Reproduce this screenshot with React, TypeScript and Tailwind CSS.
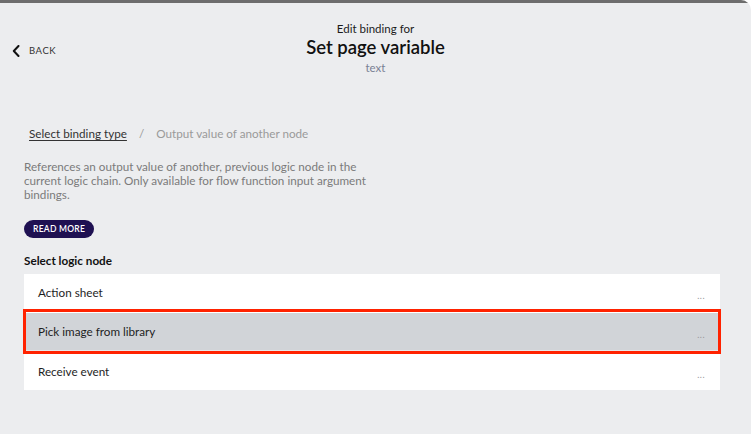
import React from 'react';

const nodes = ['Action sheet', 'Pick image from library', 'Receive event'];

function Chevron() {
  return (
    <svg width="8" height="12" viewBox="0 0 8 12" fill="none">
      <path d="M6.5 1 L1.8 6 L6.5 11" stroke="#111" strokeWidth="2" strokeLinecap="round" strokeLinejoin="round" />
    </svg>
  );
}

export default function App() {
  return (
    <div className="w-[751px] h-[434px] bg-white overflow-hidden" style={{ fontFamily: 'Lato, "Open Sans", sans-serif' }}>
      <div className="h-full rounded-tr-[10px] overflow-hidden bg-[#ecedef] flex flex-col">
        {/* top strip */}
        <div className="h-[3px] bg-[#6d6d6d]" />

        {/* header */}
        <header className="relative h-[97px] flex flex-col items-center pt-[19px]">
          <button className="absolute left-[12px] top-[41px] flex items-center gap-[9px]">
            <Chevron />
            <span className="text-[9.5px] tracking-[0.06em] text-[#333]">BACK</span>
          </button>
          <div className="text-[11.5px] leading-[14px] text-[#1b1b1b]">Edit binding for</div>
          <h1 className="text-[18.5px] leading-[22px] font-semibold text-[#111]">Set page variable</h1>
          <div className="mt-[3px] text-[11.5px] leading-[14px] text-[#7a8194]">text</div>
        </header>

        <main className="px-[24px] flex flex-col">
          {/* breadcrumb */}
          <nav className="mt-[26px] pl-[5px] flex items-center text-[11.7px] leading-[14px]">
            <span className="text-[#333] underline underline-offset-2">Select binding type</span>
            <span className="mx-[12px] text-[#999]">/</span>
            <span className="text-[#9a9a9a]">Output value of another node</span>
          </nav>

          <p className="mt-[19px] w-[366px] text-[11.7px] leading-[14px] text-[#7b7b7b]">
            References an output value of another, previous logic node in the current logic chain. Only available for flow function input argument bindings.
          </p>

          <div className="mt-[13px]">
            <button className="h-[18px] px-[9px] rounded-full bg-[#1f1152] text-white text-[8.5px] font-semibold tracking-[0.03em]">
              READ MORE
            </button>
          </div>

          <h2 className="mt-[15px] text-[11.7px] leading-[14px] font-bold text-[#111]">Select logic node</h2>

          <ul className="mt-[7px] w-[696px] bg-white flex flex-col">
            {nodes.map((n, i) => {
              const active = i === 1;
              return (
                <li
                  key={n}
                  className={
                    active
                      ? 'relative h-[41px] flex items-center justify-between pl-[14px] pr-[15px] bg-[#d1d4d8] border-t-2 border-white border-b-2 border-b-[#e6e7e9]'
                      : 'h-[37px] flex items-center justify-between pl-[14px] pr-[15px] last:h-[38px]'
                  }
                >
                  <span className="text-[11.7px] text-[#1e1e1e]">{n}</span>
                  <span className="mt-[6px] text-[9px] tracking-[0.05em] text-[#999]">...</span>
                  {active && (
                    <div className="absolute left-[-1px] right-[-1px] top-[-4px] bottom-[-4px] border-[3px] border-[#ff2200] pointer-events-none" />
                  )}
                </li>
              );
            })}
          </ul>
        </main>
      </div>
    </div>
  );
}
